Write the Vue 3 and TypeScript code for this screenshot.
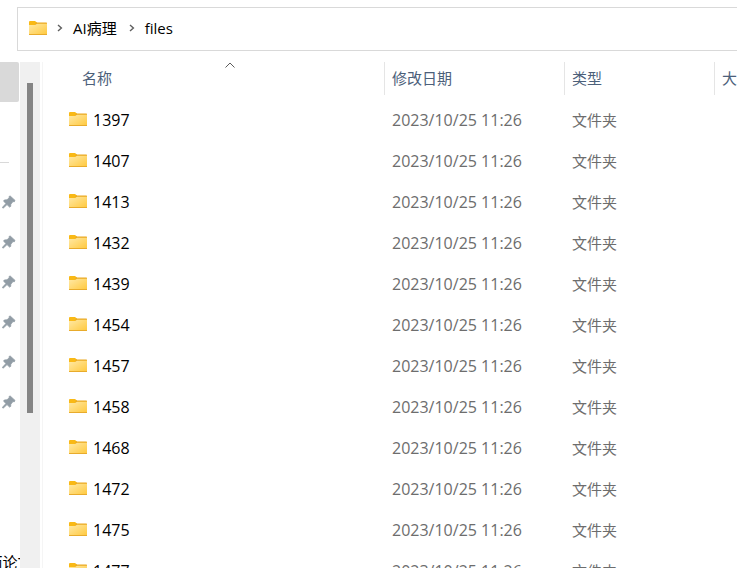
<script setup lang="ts">
import { ref } from 'vue'

interface Entry {
  name: string
  modified: string
  kind: string
}

const names: string[] = [
  '1397', '1407', '1413', '1432', '1439', '1454',
  '1457', '1458', '1468', '1472', '1475', '1477',
]
const entries: Entry[] = names.map((name) => ({
  name,
  modified: '2023/10/25 11:26',
  kind: '文件夹',
}))
const crumbs: string[] = ['AI病理', 'files']
const columns: string[] = ['名称', '修改日期', '类型', '大小']
const pins: number[] = [1, 2, 3, 4, 5, 6]
const sorted = ref<number>(0)
</script>

<template>
  <div class="explorer">
    <svg class="defs" aria-hidden="true">
      <defs>
        <linearGradient id="folder-face" x1="0" y1="0" x2="1" y2="1">
          <stop offset="0" stop-color="#ffe9a6" />
          <stop offset="1" stop-color="#ffc83c" />
        </linearGradient>
        <symbol id="folder" viewBox="0 0 18 14">
          <path d="M0 1Q0 0 1 0H6L8 1.5V4H0Z" fill="#f9b916" />
          <path d="M7 1.6H17.4Q18 1.6 18 2.2V4H6Z" fill="#e9a820" />
          <path d="M0 4H6L8 2.8H18V14H0Z" fill="url(#folder-face)" />
          <path d="M0 13H18V13.4Q18 14 17.4 14H0.6Q0 14 0 13.4Z" fill="#e8ab2c" />
        </symbol>
        <symbol id="pin" viewBox="0 0 14 14">
          <path d="M8.2 1L13 5.4L12.4 6.7L11 6.6L8.8 9.2L8.7 11.4L7.6 12.1L5 9.6L1.4 13L0.6 12.9L0.7 12L4 8.5L1.6 6.2L2.3 5L5 4.8L7.2 2.7L7.1 1.4Z" fill="#919ca5" stroke="#919ca5" stroke-width="0.8" stroke-linejoin="round" />
        </symbol>
      </defs>
    </svg>

    <header class="top">
      <nav class="address" aria-label="路径">
        <svg class="folder"><use href="#folder" /></svg>
        <template v-for="crumb in crumbs" :key="crumb">
          <svg class="next" viewBox="0 0 6 8"><path d="M1 1L4.4 4L1 7" /></svg>
          <a class="crumb" href="#">{{ crumb }}</a>
        </template>
      </nav>
    </header>

    <div class="body">
      <aside class="side">
        <button class="current" type="button" aria-label="主页"></button>
        <hr class="rule" />
        <ul class="pins">
          <li v-for="pin in pins" :key="pin">
            <svg class="pin"><use href="#pin" /></svg>
          </li>
        </ul>
        <a class="place" href="#">而论文</a>
      </aside>
      <div class="track"><div class="thumb"></div></div>

      <main class="pane">
        <table>
          <colgroup>
            <col class="c-name" />
            <col class="c-date" />
            <col class="c-kind" />
            <col class="c-size" />
          </colgroup>
          <thead>
            <tr>
              <th v-for="(column, i) in columns" :key="column" scope="col">
                <button class="sort" type="button" @click="sorted = i">
                  <svg v-if="sorted === i" class="up" viewBox="0 0 10 6"><path d="M0.5 5.5L5 1L9.5 5.5" /></svg>
                  {{ column }}
                </button>
              </th>
            </tr>
          </thead>
          <tbody>
            <tr v-for="entry in entries" :key="entry.name">
              <td>
                <div class="file">
                  <svg class="folder"><use href="#folder" /></svg>
                  <span>{{ entry.name }}</span>
                </div>
              </td>
              <td class="date">{{ entry.modified }}</td>
              <td class="kind">{{ entry.kind }}</td>
              <td></td>
            </tr>
          </tbody>
        </table>
      </main>
    </div>
  </div>
</template>

<style>
body {
  margin: 0;
  overflow: hidden;
}
</style>

<style scoped>
.explorer {
  display: flex;
  flex-direction: column;
  height: 100vh;
  overflow: hidden;
  background: #fff;
  color: #000;
  font: 15px/20px "Open Sans", "Noto Sans CJK SC", sans-serif;
}
.defs {
  position: absolute;
  width: 0;
  height: 0;
}
a {
  color: inherit;
  text-decoration: none;
}
button {
  border: 0;
  background: none;
  color: inherit;
  font: inherit;
}
.folder {
  flex: none;
  width: 18px;
  height: 14px;
}
.top {
  flex: none;
  padding: 7px 0 11px 17px;
}
.address {
  display: flex;
  align-items: center;
  box-sizing: border-box;
  height: 44px;
  padding: 0 0 2px 11px;
  border: 1px solid #d9d9d9;
  border-right: 0;
}
.crumb {
  margin-right: 2px;
}
.next {
  flex: none;
  width: 6px;
  height: 8px;
  margin: 0 10px;
  fill: none;
  stroke: #5f5f5f;
  stroke-width: 1.4;
}
.body {
  display: flex;
  flex: 1;
  min-height: 0;
}
.side {
  display: flex;
  flex: none;
  flex-direction: column;
  align-items: flex-start;
  width: 20px;
  overflow: hidden;
}
.current {
  flex: none;
  width: 19px;
  height: 40px;
  padding: 0;
  border-radius: 0 2px 2px 0;
  background: #d9d9d9;
}
.rule {
  flex: none;
  width: 9px;
  height: 1px;
  margin: 60px 0 19px;
  border: 0;
  background: #d9d9d9;
}
.pins {
  margin: 0;
  padding: 0 0 0 2px;
  list-style: none;
}
.pins li {
  display: flex;
  align-items: center;
  height: 40px;
}
.pin {
  width: 14px;
  height: 14px;
}
.place {
  align-self: center;
  margin: 130px 0 0;
  white-space: nowrap;
}
.track {
  flex: none;
  width: 20px;
  background: #f0f0f0;
}
.thumb {
  width: 6px;
  height: 330px;
  margin: 21px 7px;
  background: #858585;
}
.pane {
  flex: 1;
  min-width: 0;
  margin-left: 2px;
  overflow: hidden;
  border-left: 1px solid #f5f5f5;
}
table {
  width: 752px;
  margin-left: 26px;
  border-collapse: collapse;
  table-layout: fixed;
}
.c-name {
  width: 316px;
}
.c-date {
  width: 180px;
}
.c-kind {
  width: 150px;
}
th {
  padding: 0 0 4px;
  font-weight: 400;
}
.sort {
  position: relative;
  display: block;
  box-sizing: border-box;
  width: 100%;
  height: 33px;
  padding: 0 7px 2px;
  border-right: 1px solid #e5e5e5;
  color: #4c607a;
  text-align: left;
}
th:first-child .sort {
  padding-left: 13px;
}
.up {
  position: absolute;
  top: 0;
  left: calc(50% - 2px);
  width: 10px;
  height: 6px;
  fill: none;
  stroke: #5c5c5c;
}
td {
  height: 41px;
  padding: 0 0 0 7px;
  color: #6d6d6d;
}
td:first-child {
  padding: 0;
  color: #000;
}
.file {
  display: flex;
  align-items: center;
  gap: 6px;
  font-size: 16px;
}
.file .folder {
  margin-bottom: 2px;
}
.date {
  font-size: 16px;
}
</style>
